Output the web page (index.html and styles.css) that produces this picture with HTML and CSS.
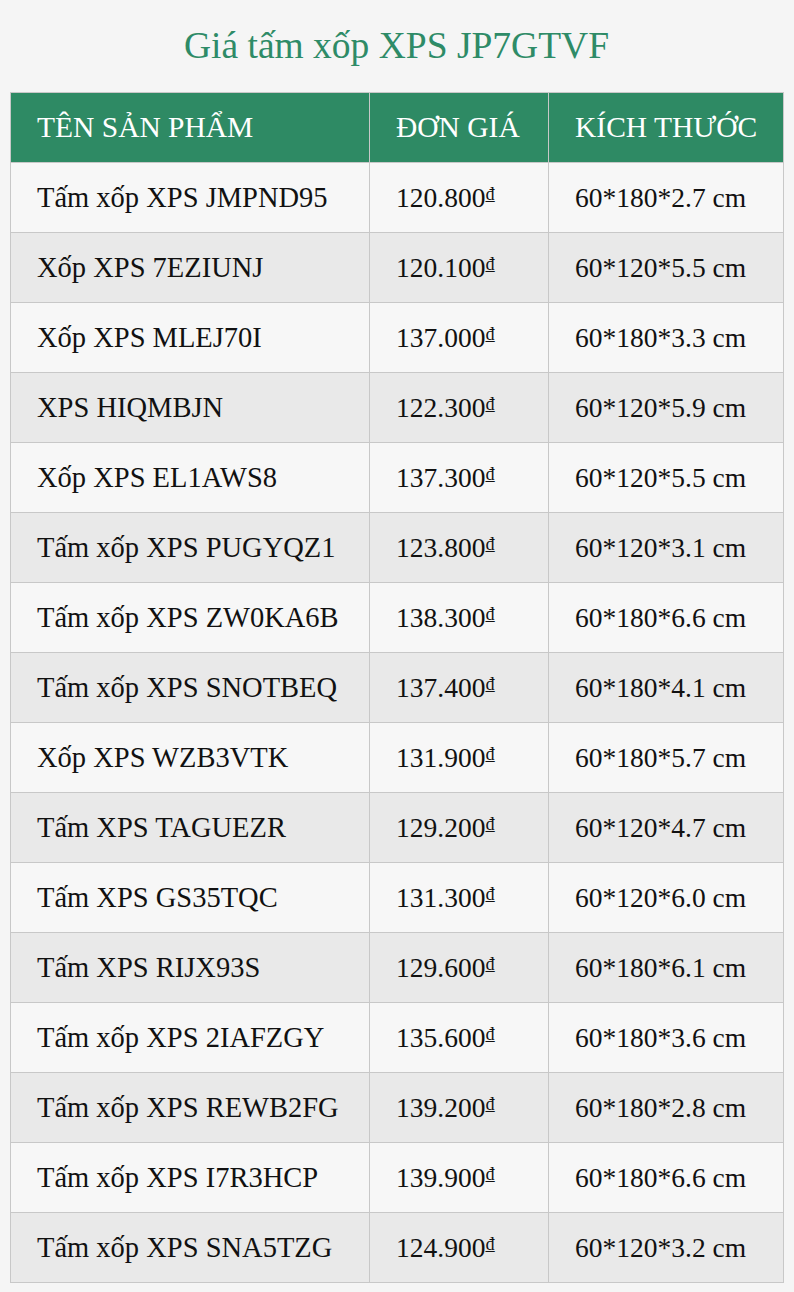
FILE: index.html
```html
<!DOCTYPE html>
<html lang="vi">
<head>
<meta charset="utf-8">
<link rel="stylesheet" href="styles.css">
</head>
<body>
<div class="page">
  <h1 class="title">Giá tấm xốp XPS JP7GTVF</h1>
  <table class="price-table">
    <colgroup>
      <col class="c1"><col class="c2"><col class="c3">
    </colgroup>
    <thead>
      <tr><th>TÊN SẢN PHẨM</th><th>ĐƠN GIÁ</th><th>KÍCH THƯỚC</th></tr>
    </thead>
    <tbody>
      <tr><td class="name">Tấm xốp XPS JMPND95</td><td>120.800<span class="cur">₫</span></td><td>60*180*2.7 cm</td></tr>
      <tr><td class="name">Xốp XPS 7EZIUNJ</td><td>120.100<span class="cur">₫</span></td><td>60*120*5.5 cm</td></tr>
      <tr><td class="name">Xốp XPS MLEJ70I</td><td>137.000<span class="cur">₫</span></td><td>60*180*3.3 cm</td></tr>
      <tr><td class="name">XPS HIQMBJN</td><td>122.300<span class="cur">₫</span></td><td>60*120*5.9 cm</td></tr>
      <tr><td class="name">Xốp XPS EL1AWS8</td><td>137.300<span class="cur">₫</span></td><td>60*120*5.5 cm</td></tr>
      <tr><td class="name">Tấm xốp XPS PUGYQZ1</td><td>123.800<span class="cur">₫</span></td><td>60*120*3.1 cm</td></tr>
      <tr><td class="name">Tấm xốp XPS ZW0KA6B</td><td>138.300<span class="cur">₫</span></td><td>60*180*6.6 cm</td></tr>
      <tr><td class="name">Tấm xốp XPS SNOTBEQ</td><td>137.400<span class="cur">₫</span></td><td>60*180*4.1 cm</td></tr>
      <tr><td class="name">Xốp XPS WZB3VTK</td><td>131.900<span class="cur">₫</span></td><td>60*180*5.7 cm</td></tr>
      <tr><td class="name">Tấm XPS TAGUEZR</td><td>129.200<span class="cur">₫</span></td><td>60*120*4.7 cm</td></tr>
      <tr><td class="name">Tấm XPS GS35TQC</td><td>131.300<span class="cur">₫</span></td><td>60*120*6.0 cm</td></tr>
      <tr><td class="name">Tấm XPS RIJX93S</td><td>129.600<span class="cur">₫</span></td><td>60*180*6.1 cm</td></tr>
      <tr><td class="name">Tấm xốp XPS 2IAFZGY</td><td>135.600<span class="cur">₫</span></td><td>60*180*3.6 cm</td></tr>
      <tr><td class="name">Tấm xốp XPS REWB2FG</td><td>139.200<span class="cur">₫</span></td><td>60*180*2.8 cm</td></tr>
      <tr><td class="name">Tấm xốp XPS I7R3HCP</td><td>139.900<span class="cur">₫</span></td><td>60*180*6.6 cm</td></tr>
      <tr><td class="name">Tấm xốp XPS SNA5TZG</td><td>124.900<span class="cur">₫</span></td><td>60*120*3.2 cm</td></tr>
    </tbody>
  </table>
</div>
</body>
</html>
```

FILE: styles.css
```css
html, body {
  margin: 0;
  padding: 0;
  background: #f5f5f5;
}
.page {
  padding: 0 11px 0 10px;
  font-family: "Liberation Serif", "DejaVu Serif", serif;
  color: #111;
}
.title {
  margin: 0;
  padding-top: 24px;
  height: 92px;
  box-sizing: border-box;
  text-align: center;
  font-weight: normal;
  font-size: 37.5px;
  line-height: 44px;
  color: #2e8b67;
}
.price-table {
  width: 773px;
  border-collapse: collapse;
  table-layout: fixed;
}
.c1 { width: 359px; }
.c2 { width: 179px; }
.c3 { width: 235px; }
.price-table th,
.price-table td {
  border: 1px solid #c8c8c8;
  height: 70px;
  padding: 0 0 0 26px;
  text-align: left;
  vertical-align: middle;
  font-size: 27.5px;
  font-weight: normal;
  white-space: nowrap;
  box-sizing: border-box;
}
.price-table td.name {
  font-size: 28.5px;
}
.price-table th {
  background: #2e8a64;
  color: #fff;
  font-size: 29.5px;
}
.price-table tbody tr:nth-child(odd) td { background: #f7f7f7; }
.price-table tbody tr:nth-child(even) td { background: #e9e9e9; }
.cur {
  font-size: 18px;
  vertical-align: 7px;
  text-decoration: underline;
}
```
